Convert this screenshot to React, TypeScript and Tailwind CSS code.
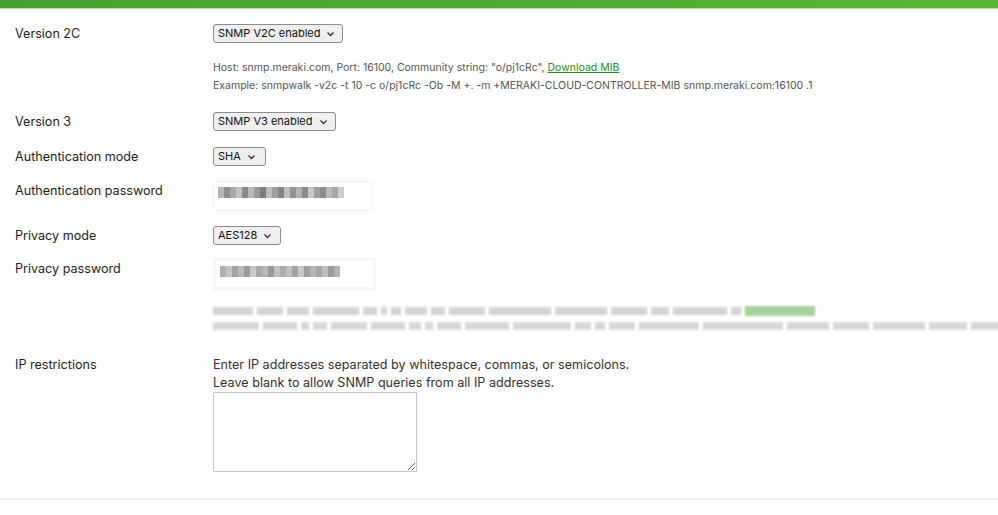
import { ReactNode } from "react";

const Chevron = () => (
  <svg width="9" height="6" viewBox="0 0 9 6" className="ml-auto shrink-0">
    <path d="M1.5 1.5 L4.5 4.5 L7.5 1.5" fill="none" stroke="#333" strokeWidth="1.3" />
  </svg>
);

const Select = ({ label, width }: { label: string; width: string }) => (
  <div
    className={`flex items-center gap-[6px] h-[19px] ${width} pl-[4px] pr-[10px] bg-[#efefef] border border-[#8d8d8d] rounded-[3px] text-[11px] text-[#111] leading-none whitespace-nowrap`}
  >
    <span>{label}</span>
    <Chevron />
  </div>
);

const Row = ({ label, children, className = "", labelClass = "leading-[19px]" }: { label: string; children: ReactNode; className?: string; labelClass?: string }) => (
  <div className={`flex ${className}`}>
    <div className={`w-[198px] shrink-0 text-[12.6px] text-[#1e1e1e] ${labelClass}`}>{label}</div>
    <div className="flex-1">{children}</div>
  </div>
);

// mosaic shades for the blurred password fields
const authShades = [
  "bg-[#b5b5b5]", "bg-[#8f8f8f]", "bg-[#a8a8a8]", "bg-[#c4c4c4]", "bg-[#8a8a8a]", "bg-[#b9b9b9]",
  "bg-[#9a9a9a]", "bg-[#7d7d7d]", "bg-[#bdbdbd]", "bg-[#a0a0a0]", "bg-[#858585]", "bg-[#c0c0c0]",
  "bg-[#939393]", "bg-[#b2b2b2]", "bg-[#888888]", "bg-[#c6c6c6]", "bg-[#9e9e9e]", "bg-[#8c8c8c]",
  "bg-[#bababa]", "bg-[#a5a5a5]", "bg-[#cfcfcf]",
];
const privShades = [
  "bg-[#b0b0b0]", "bg-[#c5c5c5]", "bg-[#a3a3a3]", "bg-[#bcbcbc]", "bg-[#9b9b9b]", "bg-[#c8c8c8]",
  "bg-[#a9a9a9]", "bg-[#b8b8b8]", "bg-[#999999]", "bg-[#c2c2c2]", "bg-[#adadad]", "bg-[#bfbfbf]",
  "bg-[#a1a1a1]", "bg-[#c9c9c9]", "bg-[#9f9f9f]", "bg-[#b6b6b6]", "bg-[#a6a6a6]", "bg-[#c0c0c0]",
  "bg-[#9d9d9d]", "bg-[#b3b3b3]",
];

const Mosaic = ({ shades }: { shades: string[] }) => (
  <div className="flex blur-[0.6px]">
    {shades.map((s, i) => (
      <div key={i} className={`w-[6px] h-[11px] ${s}`} />
    ))}
  </div>
);

// widths of the blurred words in the privacy notice
const line1 = [40, 26, 22, 46, 14, 6, 10, 22, 14, 36, 62, 52, 36, 18, 54, 10];
const line2 = [46, 34, 8, 14, 36, 34, 12, 8, 24, 44, 58, 16, 10, 26, 60, 80, 42, 36, 52, 38, 48];

const App = () => {
  return (
    <div className="w-[998px] h-[515px] bg-white overflow-hidden font-['Inter',sans-serif]">
      <div className="h-[8px] bg-gradient-to-r from-[#46a030] to-[#5ab534]" />
      <div className="h-[1px] bg-[#b7dfa6]" />

      <div className="pl-[15px] pt-[15px]">
        <Row label="Version 2C">
          <Select label="SNMP V2C enabled" width="w-[130px]" />
        </Row>

        <div className="ml-[198px] mt-[16px] text-[10.5px] leading-[18px] text-[#555]">
          <div>
            Host: snmp.meraki.com, Port: 16100, Community string: "o/pj1cRc",{" "}
            <a className="text-[#1f8a24] underline">Download MIB</a>
          </div>
          <div>
            Example: snmpwalk -v2c -t 10 -c o/pj1cRc -Ob -M +. -m +MERAKI-CLOUD-CONTROLLER-MIB snmp.meraki.com:16100 .1
          </div>
        </div>

        <Row label="Version 3" className="mt-[17px]">
          <Select label="SNMP V3 enabled" width="w-[123px]" />
        </Row>

        <Row label="Authentication mode" className="mt-[16px]">
          <Select label="SHA" width="w-[53px]" />
        </Row>

        <Row label="Authentication password" className="mt-[15px]">
          <div className="w-[160px] h-[30px] border border-[#f3f3f3] pl-[4px] pt-[5px]">
            <Mosaic shades={authShades} />
          </div>
        </Row>

        <Row label="Privacy mode" className="mt-[15px]">
          <Select label="AES128" width="w-[68px]" />
        </Row>

        <Row label="Privacy password" className="mt-[13px]" labelClass="leading-[22px]">
          <div className="w-[163px] h-[32px] bg-[#f6f6f6] p-[3px]">
            <div className="h-full bg-white pl-[4px] pt-[5px]">
              <Mosaic shades={privShades} />
            </div>
          </div>
        </Row>

        <div className="ml-[198px] mt-[16px] flex flex-col gap-[5px] blur-[1px]">
          <div className="flex gap-[4px] items-center h-[10px]">
            {line1.map((w, i) => (
              <div key={i} className="h-[8px] bg-[#d4d4d4]" style={{ width: w }} />
            ))}
            <div className="h-[10px] w-[70px] bg-[#a9cf9c]" />
          </div>
          <div className="flex gap-[4px] items-center h-[10px]">
            {line2.map((w, i) => (
              <div key={i} className="h-[8px] bg-[#d8d8d8] shrink-0" style={{ width: w }} />
            ))}
          </div>
        </div>

        <Row label="IP restrictions" className="mt-[25px]" labelClass="leading-[18px]">
          <div className="text-[12.6px] leading-[18px] text-[#333]">
            <div>Enter IP addresses separated by whitespace, commas, or semicolons.</div>
            <div>Leave blank to allow SNMP queries from all IP addresses.</div>
          </div>
          <textarea className="block w-[204px] h-[80px] border border-[#c8c8c8] rounded-[1px] resize" />
        </Row>
      </div>

      <div className="mt-[26px] h-[2px] bg-[#f0f0f0]" />
    </div>
  );
};

export default App;
